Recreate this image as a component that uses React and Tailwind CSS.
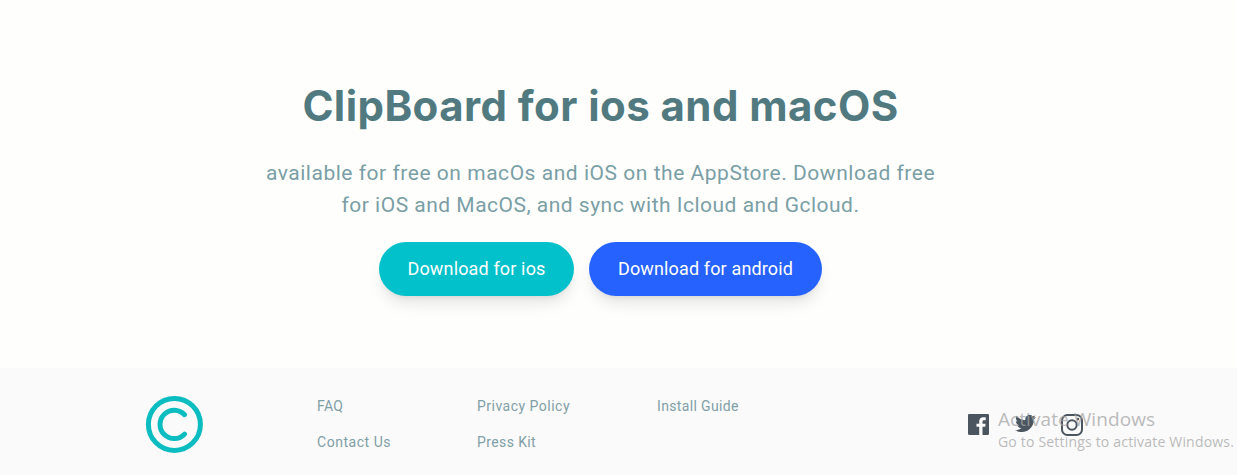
const columns = [
  { width: 'w-[160px]', links: [['FAQ', 'tracking-[0.3px]'], ['Contact Us', 'tracking-[0.53px]']] },
  { width: 'w-[180px]', links: [['Privacy Policy', 'tracking-[0.49px]'], ['Press Kit', 'tracking-[0.39px]']] },
  { width: 'w-[311px]', links: [['Install Guide', 'tracking-[0.36px]']] },
];

function Logo() {
  return (
    <svg className="size-[58px]" viewBox="0 0 58 58" fill="none" stroke="#0bbdc0" strokeWidth="5" strokeLinecap="round">
      <circle cx="29.4" cy="29.4" r="26" />
      <path d="M39.6 19.7A14.2 14.2 0 1 0 39.6 39.1" />
    </svg>
  );
}

function Facebook() {
  return (
    <svg className="size-[21px]" viewBox="0 0 24 24" fill="#4a555f">
      <path d="M22.675 0H1.325C.593 0 0 .593 0 1.325v21.351C0 23.407.593 24 1.325 24H12.82v-9.294H9.692v-3.622h3.128V8.413c0-3.1 1.893-4.788 4.659-4.788 1.325 0 2.463.099 2.795.143v3.24l-1.918.001c-1.504 0-1.795.715-1.795 1.763v2.313h3.587l-.467 3.622h-3.12V24h6.116c.73 0 1.323-.593 1.323-1.325V1.325C24 .593 23.407 0 22.675 0z" />
    </svg>
  );
}

function Twitter() {
  return (
    <svg className="-mt-[1.5px] size-[21px]" viewBox="0 0 24 24" fill="#4a555f">
      <path d="M24 4.557c-.883.392-1.832.656-2.828.775 1.017-.609 1.798-1.574 2.165-2.724-.951.564-2.005.974-3.127 1.195-.897-.957-2.178-1.555-3.594-1.555-3.179 0-5.515 2.966-4.797 6.045-4.091-.205-7.719-2.165-10.148-5.144-1.29 2.213-.669 5.108 1.523 6.574-.806-.026-1.566-.247-2.229-.616-.054 2.281 1.581 4.415 3.949 4.89-.693.188-1.452.232-2.224.084.626 1.956 2.444 3.379 4.6 3.419-2.07 1.623-4.678 2.348-7.29 2.04 2.179 1.397 4.768 2.212 7.548 2.212 9.142 0 14.307-7.721 13.995-14.646.962-.695 1.797-1.562 2.457-2.549z" />
    </svg>
  );
}

function Instagram() {
  return (
    <svg className="size-[22px]" viewBox="0 0 22 22" fill="none" stroke="#4a555f" strokeWidth="2">
      <rect x="1" y="1" width="20" height="20" rx="5.5" />
      <circle cx="11" cy="11" r="4.7" />
      <circle cx="16.9" cy="5.1" r="1.3" fill="#4a555f" stroke="none" />
    </svg>
  );
}

export default function App() {
  return (
    <div className="flex h-[475px] w-[1237px] flex-col overflow-hidden bg-[#fefefd] font-['Roboto',sans-serif]">
      <main className="flex h-[368px] w-[1201px] flex-col items-center pt-[82px] text-center">
        <h1 className="font-['Inter',sans-serif] text-[42px] leading-[48px] font-bold tracking-[0.43px] whitespace-nowrap text-[#507a80]">
          ClipBoard for ios and macOS
        </h1>
        <p className="mt-[27px] text-[21px] leading-8 whitespace-nowrap text-[#7a9ea5]">
          <span className="tracking-[0.53px]">available for free on macOs and iOS on the AppStore. Download free</span>
          <br />
          <span className="tracking-[0.49px]">for iOS and MacOS, and sync with Icloud and Gcloud.</span>
        </p>
        <div className="mt-[21px] flex gap-[15px] text-lg whitespace-nowrap text-white">
          <button className="h-[54px] w-[195px] rounded-full bg-[#02c1ca] tracking-[0.15px] shadow-lg">Download for ios</button>
          <button className="h-[54px] w-[233px] rounded-full bg-[#2663fe] tracking-[0.14px] shadow-lg">Download for android</button>
        </div>
      </main>
      <footer className="relative flex h-[107px] bg-[#fafafa] pl-[145px]">
        <div className="w-[172px] pt-[27px]">
          <Logo />
        </div>
        {columns.map((column, i) => (
          <ul key={i} className={`${column.width} flex flex-col gap-3 pt-[26px] text-sm leading-6 text-[#7f9fa6]`}>
            {column.links.map(([label, tracking]) => (
              <li key={label}>
                <a className={tracking}>{label}</a>
              </li>
            ))}
          </ul>
        ))}
        <div className="flex items-start gap-[25.5px] pt-[46px]">
          <Facebook />
          <Twitter />
          <Instagram />
        </div>
        <div className="pointer-events-none absolute top-[38px] left-[998px] font-['Open_Sans','Noto_Sans',sans-serif] whitespace-nowrap text-[#a4a4a4]/75">
          <div className="text-[19px] leading-[26px] tracking-[0.07px]">Activate Windows</div>
          <div className="text-sm leading-5 tracking-[0.19px]">Go to Settings to activate Windows.</div>
        </div>
      </footer>
    </div>
  );
}
